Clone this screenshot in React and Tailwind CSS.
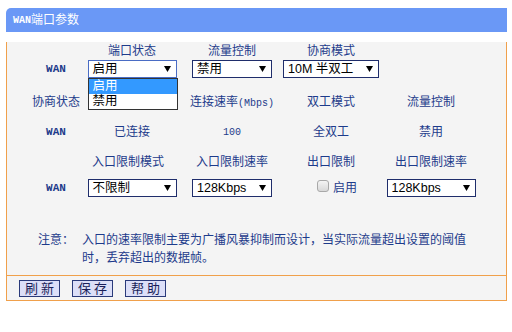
import React from "react";

const FONT = { fontFamily: '"Liberation Sans","Noto Sans CJK SC",sans-serif' };

function Arrow() {
  return (
    <svg width="7" height="6" viewBox="0 0 7 6" className="shrink-0">
      <polygon points="0,0 7,0 3.5,6" fill="#000" />
    </svg>
  );
}

function Select({ className, value, children }) {
  return (
    <div className={"relative h-[18px] border bg-white flex items-center justify-between pl-[4px] pr-[5px] text-[12.5px] leading-none text-black shrink-0 " + className}>
      <span>{value}</span>
      <Arrow />
      {children}
    </div>
  );
}

function Mono({ children }) {
  return <span className="font-['Liberation_Mono',monospace] text-[10px]">{children}</span>;
}

function Wan() {
  return <span className="font-['Liberation_Mono',monospace] text-[11px] font-bold">WAN</span>;
}

function Row({ className, cells }) {
  const widths = ["w-[72px]", "w-[80px]", "w-[120px]", "w-[78px]", "w-[122px]"];
  return (
    <div className={"flex h-[18px] ml-[13px] " + (className || "")}>
      {cells.map((c, i) => (
        <div key={i} className={"flex items-center justify-center shrink-0 " + widths[i]}>
          {c}
        </div>
      ))}
    </div>
  );
}

export default function App() {
  return (
    <div className="w-[512px] h-[332px] bg-white pt-[8px] pl-[6px] text-[12px] text-[#1d3b8b]" style={FONT}>
      <div className="w-[501px]">
        <div className="h-[24px] bg-[#6a98f6] rounded-tl-[5px] flex items-center pl-[7px] text-white text-[12px]">
          <span className="font-['Liberation_Mono',monospace] text-[10px] font-bold">WAN</span>
          <span>端口参数</span>
        </div>
        <div className="border-x border-b border-[#f0a04b] bg-[#f4f4f4] pb-[3px]">
          <Row className="mt-[10px]" cells={["", "端口状态", "流量控制", "协商模式", ""]} />
          <Row
            cells={[
              <Wan />,
              <Select className="w-[89px] border-[#4a6cc4]" value="启用">
                <div className="absolute left-[-1px] top-[17px] w-[90px] border border-[#333] bg-white z-10 text-[12.5px]">
                  <div className="h-[15px] flex items-center pl-[4px] bg-[#3399ff] text-white">启用</div>
                  <div className="h-[15px] flex items-center pl-[4px] text-black">禁用</div>
                </div>
              </Select>,
              <Select className="w-[80px] border-[#1f2d6b]" value="禁用" />,
              <Select className="w-[96px] border-[#1f2d6b]" value="10M 半双工" />,
              "",
            ]}
          />
          <Row
            className="mt-[15px]"
            cells={[
              "协商状态",
              "",
              <span>
                连接速率<Mono>(Mbps)</Mono>
              </span>,
              "双工模式",
              "流量控制",
            ]}
          />
          <Row className="mt-[12px]" cells={[<Wan />, "已连接", <Mono>100</Mono>, "全双工", "禁用"]} />
          <Row
            className="mt-[12px]"
            cells={[
              "",
              <span className="pr-[8px]">入口限制模式</span>,
              "入口限制速率",
              "出口限制",
              "出口限制速率",
            ]}
          />
          <Row
            className="mt-[8px]"
            cells={[
              <Wan />,
              <Select className="w-[89px] border-[#1f2d6b]" value="不限制" />,
              <Select className="w-[80px] border-[#1f2d6b]" value="128Kbps" />,
              <div className="flex items-center pl-[12px]">
                <div className="w-[12px] h-[12px] rounded-[3px] border border-[#a8a8a8] bg-gradient-to-b from-[#f4f4f4] to-[#d8d8d8] -mt-[4px]" />
                <span className="ml-[4px]">启用</span>
              </div>,
              <Select className="w-[89px] border-[#1f2d6b]" value="128Kbps" />,
            ]}
          />
          <div className="flex mt-[34px] pl-[31px] leading-[18px]">
            <div className="w-[44px] shrink-0">注意：</div>
            <div>
              入口的速率限制主要为广播风暴抑制而设计，当实际流量超出设置的阈值
              <br />
              时，丢弃超出的数据帧。
            </div>
          </div>
          <div className="mt-[8px] h-px bg-[#f0a04b]" />
          <div className="flex gap-[12px] pl-[12px] pt-[4px]">
            {["刷新", "保存", "帮助"].map((t) => (
              <div
                key={t}
                className="w-[41px] h-[17px] border border-[#2a3a7a] bg-[#dcdff8] flex items-center justify-center text-[13px] tracking-[3px] pl-[3px] text-[#1a1f5a] leading-none"
              >
                {t}
              </div>
            ))}
          </div>
        </div>
      </div>
    </div>
  );
}
